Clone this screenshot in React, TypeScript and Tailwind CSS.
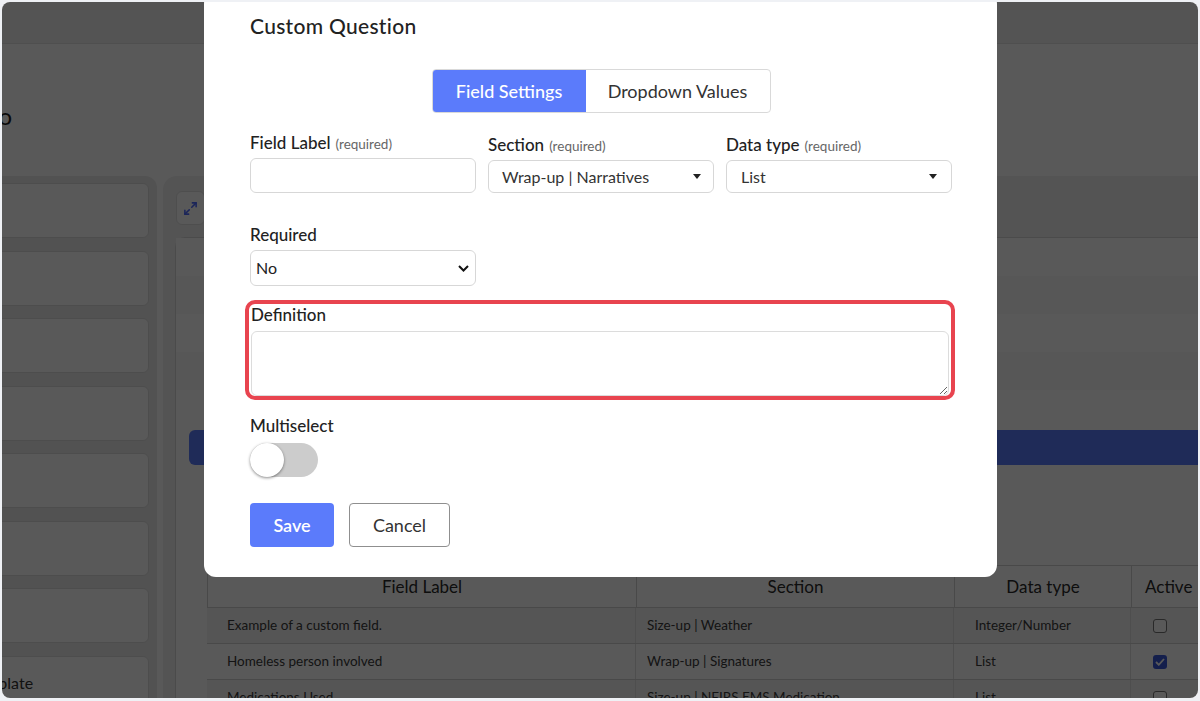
import { Maximize2 } from "lucide-react";

type CustomField = {
  label: string;
  section: string;
  type: string;
  active: boolean;
};

const customFields: CustomField[] = [
  { label: "Example of a custom field.", section: "Size-up | Weather", type: "Integer/Number", active: false },
  { label: "Homeless person involved", section: "Wrap-up | Signatures", type: "List", active: true },
  { label: "Medications Used", section: "Size-up | NFIRS EMS Medication", type: "List", active: false },
];

const sideCards = ["Summary", "Patient", "Fire", "EMS", "Hazmat", "Rescue", "Training", "Narrative Template"];

function Caret() {
  return (
    <svg width="8" height="5" viewBox="0 0 8 5" className="shrink-0">
      <path d="M0 0h8L4 5z" fill="#222" />
    </svg>
  );
}

function Chevron() {
  return (
    <svg width="11" height="7" viewBox="0 0 11 7" className="shrink-0">
      <path d="M1 1l4.5 4.5L10 1" fill="none" stroke="#111" strokeWidth="2" />
    </svg>
  );
}

function FieldLabel({ text, note }: { text: string; note?: string }) {
  return (
    <label className="flex h-[20px] items-baseline gap-[5px] text-[17px] leading-[20px] font-medium whitespace-nowrap text-[#222]">
      {text}
      {note && <span className="text-[13.5px] leading-none font-normal text-[#666]">{note}</span>}
    </label>
  );
}

function Checkbox({ checked }: { checked: boolean }) {
  if (checked) {
    return (
      <span className="flex h-[14px] w-[14px] items-center justify-center rounded-[3px] bg-[#3b5bdb]">
        <svg width="10" height="8" viewBox="0 0 10 8">
          <path d="M1 4l2.8 2.8L9 1" fill="none" stroke="#fff" strokeWidth="1.8" />
        </svg>
      </span>
    );
  }
  return <span className="block h-[14px] w-[14px] rounded-[3px] border border-[#767676] bg-white" />;
}

function PageBehind() {
  return (
    <div className="flex h-full flex-col">
      <div className="h-[42px] shrink-0 border-b border-[#e2e2e2] bg-[#f0f0f0]" />
      <div className="h-[132px] shrink-0 pt-[56px]">
        <div className="flex w-[10px] justify-end whitespace-nowrap text-[24px] leading-[32px] text-[#1f1f1f]">
          Custom Fields Info
        </div>
      </div>

      <div className="flex min-h-0 flex-1 gap-[6px]">
        <aside className="-ml-[129px] w-[284px] shrink-0 rounded-tr-[12px] bg-[#eaeaea] px-[8px] pt-[7px]">
          <div className="flex flex-col gap-[12.5px]">
            {sideCards.map((name) => (
              <div
                key={name}
                className="flex h-[55px] items-center rounded-[6px] border border-[#dcdcdc] bg-white pl-[18px] text-[16px] whitespace-nowrap text-[#333]"
              >
                {name}
              </div>
            ))}
          </div>
        </aside>

        <section className="min-w-0 flex-1 rounded-tl-[14px] bg-[#efeff0] pt-[15px] pl-[12px]">
          <button className="ml-[1px] flex h-[34px] w-[29px] items-center justify-center rounded-[6px] border border-[#e0e0e0] bg-white text-[#4f6bff]">
            <Maximize2 size={15} strokeWidth={2.5} />
          </button>

          <div className="mt-[12px] h-full rounded-tl-[10px] border-t border-l border-[#d6d6d6] bg-white">
            <div className="flex flex-col">
              {[0, 1, 2, 3, 4].map((i) => (
                <div key={i} className={i % 2 ? "h-[38px] bg-[#fafafa]" : "h-[38px] bg-white"} />
              ))}
            </div>
            <div className="mt-[2px] ml-[13px] h-[35px] rounded-l-[6px] bg-[#5b7bfb]" />

            <div className="mt-[100px] ml-[31px] w-[1014px] text-[#3a3a3a]">
              <div className="grid h-[42px] grid-cols-[429px_318px_177px_90px] rounded-tl-[6px] border-t border-l border-[#d2d2d2] text-[17px] text-[#2a2a2a]">
                <div className="flex items-center justify-center border-r border-[#d2d2d2]">Field Label</div>
                <div className="flex items-center justify-center border-r border-[#d2d2d2]">Section</div>
                <div className="flex items-center justify-center border-r border-[#d2d2d2]">Data type</div>
                <div className="flex items-center pl-[13px]">Active</div>
              </div>
              {customFields.map((f, i) => (
                <div
                  key={f.label}
                  className={`grid h-[36px] grid-cols-[429px_318px_177px_90px] border-t border-[#d2d2d2] text-[13.5px] ${
                    i % 2 === 0 ? "bg-[#f4f4f4]" : "bg-white"
                  }`}
                >
                  <div className="flex items-center border-r border-[#dedede] pl-[20px]">{f.label}</div>
                  <div className="flex items-center border-r border-[#dedede] pl-[11px]">{f.section}</div>
                  <div className="flex items-center border-r border-[#dedede] pl-[21px]">{f.type}</div>
                  <div className="flex items-center pl-[22px]">
                    <Checkbox checked={f.active} />
                  </div>
                </div>
              ))}
            </div>
          </div>
        </section>
      </div>
    </div>
  );
}

function CustomQuestionModal() {
  return (
    <div className="absolute top-[-10px] left-[202px] w-[793px] rounded-[12px] bg-white pt-[20px] pr-[45px] pb-[30px] pl-[46px] text-[#222]">
      <h2 className="text-[21px] leading-[28px] font-medium tracking-[0.3px]">Custom Question</h2>

      <div className="mt-[29px] flex justify-center">
        <div className="flex h-[44px] overflow-hidden rounded-[4px] border border-[#d9d9d9] text-[18px]">
          <div className="flex w-[153px] items-center justify-center bg-[#5b7bfb] font-medium text-white">
            Field Settings
          </div>
          <div className="flex w-[184px] items-center justify-center text-[#333]">Dropdown Values</div>
        </div>
      </div>

      <div className="mt-[20px] grid grid-cols-3 items-end gap-x-[12px]">
        <div>
          <FieldLabel text="Field Label" note="(required)" />
          <input className="mt-[5px] block h-[35px] w-full rounded-[6px] border border-[#d7d7d7] bg-white px-[14px] text-[16px] outline-none" />
        </div>
        <div>
          <FieldLabel text="Section" note="(required)" />
          <div className="mt-[5px] flex h-[33px] items-center justify-between rounded-[6px] border border-[#d7d7d7] pr-[12px] pl-[13px] text-[16px] text-[#333]">
            <span>Wrap-up | Narratives</span>
            <Caret />
          </div>
        </div>
        <div>
          <FieldLabel text="Data type" note="(required)" />
          <div className="mt-[5px] flex h-[33px] items-center justify-between rounded-[6px] border border-[#d7d7d7] pr-[14px] pl-[14px] text-[16px] text-[#333]">
            <span>List</span>
            <Caret />
          </div>
        </div>
      </div>

      <div className="mt-[32px]">
        <FieldLabel text="Required" />
        <div className="mt-[5px] flex h-[36px] w-[226px] items-center justify-between rounded-[6px] border border-[#d7d7d7] pr-[6px] pl-[5px] text-[16px] text-[#222]">
          <span>No</span>
          <Chevron />
        </div>
      </div>

      <div className="mt-[14px] -mr-[3px] -ml-[5px] rounded-[10px] border-4 border-[#e8444f] px-[2px] pt-[1px]">
        <FieldLabel text="Definition" />
        <textarea className="mt-[6px] block h-[65px] w-full rounded-[6px] border border-[#dcdcdc] bg-white px-[10px] py-[6px] text-[16px] outline-none" />
      </div>

      <div className="mt-[16px]">
        <FieldLabel text="Multiselect" />
        <div className="mt-[7px] flex h-[34px] w-[68px] items-center rounded-full bg-[#cccccc]">
          <span className="block h-[34px] w-[34px] rounded-full bg-white shadow-[0_1px_3px_rgba(0,0,0,0.45)]" />
        </div>
      </div>

      <div className="mt-[26px] flex gap-[15px]">
        <button className="h-[44px] w-[84px] rounded-[4px] bg-[#5b7bfb] text-[18px] font-semibold text-white">Save</button>
        <button className="h-[44px] w-[101px] rounded-[4px] border border-[#8f8f8f] bg-white text-[18px] text-[#333]">
          Cancel
        </button>
      </div>
    </div>
  );
}

export default function App() {
  return (
    <div className="h-[701px] w-[1200px] bg-[#eff1f5] px-[2px] pt-[2px] pb-[3px] font-['Lato',sans-serif]">
      <div className="relative h-full overflow-hidden rounded-[8px] bg-white">
        <PageBehind />
        <div className="absolute inset-0 bg-black/65" />
        <CustomQuestionModal />
      </div>
    </div>
  );
}
